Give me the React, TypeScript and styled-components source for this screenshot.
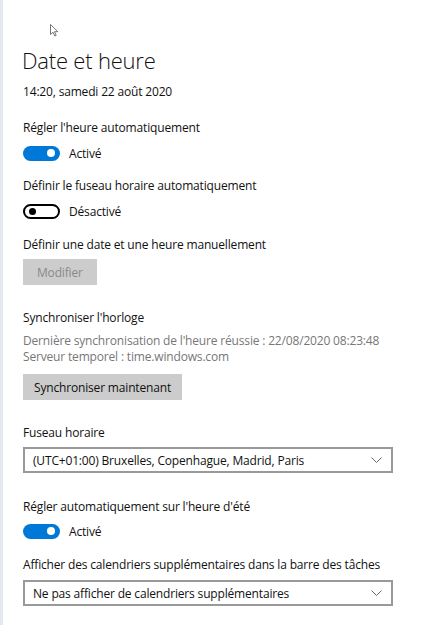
import React from "react";
import styled, { createGlobalStyle } from "styled-components";

const GlobalStyle = createGlobalStyle`
    html, body {
        margin: 0;
        padding: 0;
        background: #ffffff;
    }
    body {
        font-family: "Open Sans", "Noto Sans", sans-serif;
        color: #000000;
        letter-spacing: -0.17px;
    }
`;

const Page = styled.div`
    position: relative;
    min-height: 625px;
    box-sizing: border-box;
    padding: 44px 0 0 20px;
    border-left: 3px solid #e4e9f0;
    display: flex;
    flex-direction: column;
    align-items: flex-start;
`;

const Title = styled.h1`
    margin: 0 0 0 -1px;
    font-size: 22px;
    font-weight: 300;
    line-height: 32px;
    letter-spacing: -0.2px;
    color: #111111;
`;

const Text = styled.div<{ $top: number }>`
    margin-top: ${p => p.$top}px;
    font-size: 12px;
    line-height: 20px;
    color: #111111;
    white-space: nowrap;
`;

const Muted = styled.div`
    font-size: 12px;
    line-height: 16px;
    color: #777777;
    white-space: nowrap;
`;

const MutedBlock = styled.div`
    margin-top: 5px;
`;

const ToggleRow = styled.div<{ $top: number }>`
    margin-top: ${p => p.$top}px;
    height: 20px;
    display: flex;
    align-items: center;
    gap: 9px;
    font-size: 12px;
    color: #111111;
`;

const Track = styled.span<{ $on: boolean }>`
    box-sizing: border-box;
    width: 37px;
    height: 15px;
    border-radius: 8px;
    display: flex;
    align-items: center;
    padding: 0 ${p => (p.$on ? "5px" : "4px")};
    justify-content: ${p => (p.$on ? "flex-end" : "flex-start")};
    background: ${p => (p.$on ? "#0078d7" : "#ffffff")};
    border: ${p => (p.$on ? "none" : "2px solid #000000")};
`;

const Knob = styled.span<{ $on: boolean }>`
    width: ${p => (p.$on ? 8 : 7)}px;
    height: ${p => (p.$on ? 8 : 7)}px;
    border-radius: 50%;
    background: ${p => (p.$on ? "#ffffff" : "#000000")};
`;

const Button = styled.button<{ $top: number; $disabled?: boolean }>`
    margin-top: ${p => p.$top}px;
    height: 26px;
    padding: 0 ${p => (p.$disabled ? 14 : 11)}px;
    border: none;
    background: #cccccc;
    font-family: inherit;
    font-size: 12px;
    letter-spacing: inherit;
    color: ${p => (p.$disabled ? "#8a8a8a" : "#111111")};
`;

const Select = styled.div<{ $top: number }>`
    margin-top: ${p => p.$top}px;
    box-sizing: border-box;
    width: 370px;
    height: 26px;
    border: 2px solid #999999;
    display: flex;
    align-items: center;
    justify-content: space-between;
    padding: 0 9px 0 8px;
    font-size: 12px;
    color: #111111;
    white-space: nowrap;
`;

const Cursor = styled.svg`
    position: absolute;
    left: 47px;
    top: 24px;
`;

const Toggle: React.FC<{ on: boolean; top: number }> = ({ on, top }) => (
    <ToggleRow $top={top}>
        <Track $on={on}>
            <Knob $on={on} />
        </Track>
        {on ? "Activé" : "Désactivé"}
    </ToggleRow>
);

const Chevron = () => (
    <svg width="11" height="6" viewBox="0 0 11 6">
        <path d="M0.5 0.5 L5.5 5.5 L10.5 0.5" fill="none" stroke="#666666" strokeWidth="1" />
    </svg>
);

export default function App() {
    return (
        <>
            <GlobalStyle />
            <Page>
                <Cursor width="9" height="13" viewBox="0 0 9 13">
                    <path d="M0.5 0.5 L0.5 10.5 L3 8.2 L4.8 12 L6.2 11.4 L4.5 7.7 L7.8 7.7 Z" fill="#ffffff" stroke="#555555" strokeWidth="0.8" />
                </Cursor>
                <Title>Date et heure</Title>
                <Text $top={6}>14:20, samedi 22 août 2020</Text>

                <Text $top={16}>Régler l'heure automatiquement</Text>
                <Toggle on top={5} />

                <Text $top={13}>Définir le fuseau horaire automatiquement</Text>
                <Toggle on={false} top={5} />

                <Text $top={14}>Définir une date et une heure manuellement</Text>
                <Button $top={4} $disabled>Modifier</Button>

                <Text $top={23}>Synchroniser l'horloge</Text>
                <MutedBlock>
                    <Muted>Dernière synchronisation de l'heure réussie : 22/08/2020 08:23:48</Muted>
                    <Muted>Serveur temporel : time.windows.com</Muted>
                </MutedBlock>
                <Button $top={9}>Synchroniser maintenant</Button>

                <Text $top={23}>Fuseau horaire</Text>
                <Select $top={4}>
                    (UTC+01:00) Bruxelles, Copenhague, Madrid, Paris
                    <Chevron />
                </Select>

                <Text $top={24}>Régler automatiquement sur l'heure d'été</Text>
                <Toggle on top={4} />

                <Text $top={14}>Afficher des calendriers supplémentaires dans la barre des tâches</Text>
                <Select $top={5}>
                    Ne pas afficher de calendriers supplémentaires
                    <Chevron />
                </Select>
            </Page>
        </>
    );
}
